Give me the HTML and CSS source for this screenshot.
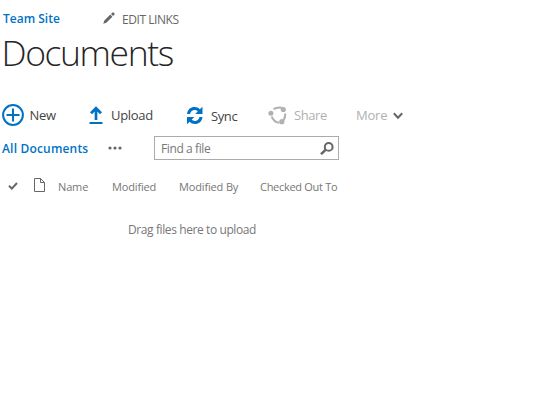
FILE: index.html
```html
<!DOCTYPE html>
<html lang="en">
<head>
<meta charset="utf-8">
<title>Documents</title>
<link rel="stylesheet" href="styles.css">
</head>
<body>
<nav class="nav">
  <a class="site">Team Site</a>
  <svg class="pencil" width="12" height="12" viewBox="0 0 12 12"><path d="M.3 11.700 1.200 8.700 7.300 2.600 9.400 4.700 3.300 10.800zM8 1.900 9.200.7Q10-.1 10.800.7L11.300 1.200Q12.100 2 11.300 2.800L10.100 4z" fill="#666"/></svg>
  <a class="edit">EDIT LINKS</a>
</nav>
<h1 class="title">Documents</h1>
<div class="toolbar">
  <svg width="22" height="22" viewBox="0 0 22 22" fill="none" stroke="#0072c6" stroke-width="2"><circle cx="11" cy="11" r="9.900"/><path d="M11 4.500v13M4.500 11h13"/></svg>
  <span class="new">New</span>
  <svg width="14" height="18" viewBox="0 0 14 18"><path d="M7 2v12M2 7.200 7 2.200l5 5" fill="none" stroke="#0072c6" stroke-width="2.700"/><path d="M.5 16h13v2H.5z" fill="#0072c6"/></svg>
  <span class="upload">Upload</span>
  <svg class="sync-icon" width="18" height="19" viewBox="0 0 18 19"><g fill="#0072c6"><path id="arc" d="M1 8C1.500 3.600 4.700 1 8.500 1c2.300 0 4 .8 5.300 2.200L16.500.7V8H9.200l2.500-2.600C10.800 4.400 9.900 4 8.700 4 6.500 4 4.600 5.500 4 8z"/><use href="#arc" transform="rotate(180 8.750 9.500)"/></g></svg>
  <span class="sync">Sync</span>
  <svg class="share-icon" width="20" height="19" viewBox="0 0 20 19"><path d="M5.500 3.200Q9.500.8 14 1.800M17.200 7.500Q17.500 11.500 15.600 14M11.300 16.800Q5.500 16 3.700 10.500" fill="none" stroke="#b1b1b1" stroke-width="2.100"/><g fill="#b1b1b1"><circle cx="15.300" cy="3.500" r="2.600"/><circle cx="2.900" cy="7.300" r="2.500"/><circle cx="13.800" cy="15.700" r="2.600"/></g></svg>
  <span class="share">Share</span>
  <span class="more">More</span>
  <svg class="chevron" width="10" height="8" viewBox="0 0 10 8"><path d="M.8 1.200 5 5.700 9.200 1.200" fill="none" stroke="#666" stroke-width="2"/></svg>
</div>
<div class="views">
  <a class="all">All Documents</a>
  <svg class="dots" width="14" height="4" viewBox="0 0 14 4" fill="#666"><circle cx="2" cy="2" r="1.600"/><circle cx="7" cy="2" r="1.600"/><circle cx="12" cy="2" r="1.600"/></svg>
  <div class="search"><span class="find">Find a file</span><svg width="14" height="13" viewBox="0 0 14 13" fill="none" stroke="#666"><circle cx="8.700" cy="4.900" r="3.900" stroke-width="2"/><path d="M5.800 7.700 1 12.200" stroke-width="2.500"/></svg></div>
</div>
<div class="columns">
  <svg class="check" width="10" height="8" viewBox="0 0 10 8"><path d="M1 3.800 3.800 6.600 9 1" fill="none" stroke="#666" stroke-width="2"/></svg>
  <svg class="page" width="11" height="14" viewBox="0 0 11 14"><path d="M.5.5h6l4 4v9H.5zM6.500.5v4h4" fill="none" stroke="#666"/></svg>
  <span class="c-name">Name</span>
  <span class="c-mod">Modified</span>
  <span class="c-by">Modified By</span>
  <span class="c-out">Checked Out To</span>
</div>
<p class="drop">Drag files here to upload</p>
</body>
</html>
```
FILE: styles.css
```css
body { margin: 0; padding-top: 7px; background: #fff; font-family: "Open Sans", "Noto Sans", sans-serif; font-size: 12px; color: #444; white-space: nowrap; }
svg { display: block; }
.nav { display: grid; grid-template-columns: 100px 19px auto; align-items: center; height: 22px; padding-left: 3px; }
.site, .all { color: #0072c6; font-weight: 600; }
.all { letter-spacing: .18px; }
.edit { color: #666; padding-top: 2px; letter-spacing: -.45px; }
.title { margin: 0; padding-left: 1.500px; height: 74px; line-height: 47px; font-size: 35.500px; font-weight: 300; letter-spacing: -1.400px; color: #262626; }
.toolbar { display: grid; grid-template-columns: 27.500px 59.500px 22px 75px 25px 57px 26px 62px 37px auto; align-items: center; height: 24px; padding-left: 2px; font-size: 13px; }
.new { letter-spacing: -.3px; }
.upload { letter-spacing: -.3px; }
.sync { letter-spacing: -.4px; position: relative; top: 1px; }
.share { letter-spacing: -.4px; }
.more { letter-spacing: -.2px; }
.share, .more { color: #b1b1b1; }
.chevron { position: relative; top: 1px; }
.views { display: grid; grid-template-columns: 106px 46px 185px; align-items: center; height: 24px; margin-top: 9px; padding-left: 2px; }
.search { display: flex; align-items: center; justify-content: space-between; box-sizing: border-box; height: 24px; padding: 0 4px 0 6px; border: 1px solid #ababab; color: #777; }
.find { letter-spacing: -.4px; }
.columns { display: grid; grid-template-columns: 26px 24px 54px 67px 81px auto; align-items: center; height: 20px; margin-top: 16px; padding-left: 8px; font-size: 11px; color: #777; }
.page { position: relative; top: -1px; }
.c-name, .c-mod, .c-by { letter-spacing: -.15px; }
.c-out { letter-spacing: -.3px; }
.drop { margin: 24px 0 0 128px; line-height: 20px; letter-spacing: -.4px; color: #777; }
```
